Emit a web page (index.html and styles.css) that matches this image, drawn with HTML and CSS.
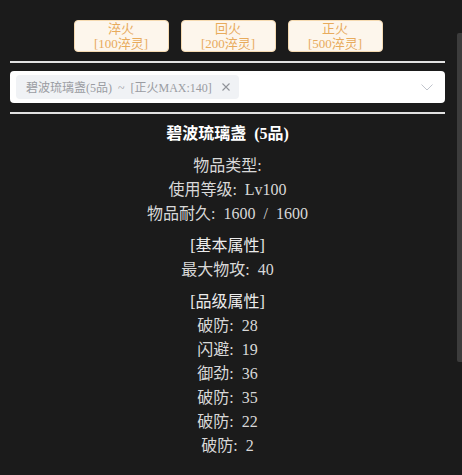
FILE: index.html
```html
<!DOCTYPE html>
<html lang="zh">
<head>
<meta charset="utf-8">
<link rel="stylesheet" href="styles.css">
</head>
<body>
<div class="page">
  <div class="actions">
    <button class="btn"><span>淬火</span><span>[100淬灵]</span></button>
    <button class="btn"><span>回火</span><span>[200淬灵]</span></button>
    <button class="btn"><span>正火</span><span>[500淬灵]</span></button>
  </div>
  <div class="rule"></div>
  <div class="select">
    <span class="tag">碧波琉璃盏(5品) ~ [正火MAX:140]
      <svg class="tag-close" width="8" height="8" viewBox="0 0 8 8"><path d="M0.5 0.5 L7.5 7.5 M7.5 0.5 L0.5 7.5" stroke="#909399" stroke-width="1.1" fill="none"/></svg>
    </span>
    <svg class="chevron" width="12" height="7" viewBox="0 0 12 7"><path d="M0.5 0.5 L6 6 L11.5 0.5" stroke="#c0c4cc" stroke-width="1" fill="none"/></svg>
  </div>
  <div class="rule"></div>
  <div class="info">
    <div class="line title">碧波琉璃盏 (5品)</div>
    <div class="group">
      <div class="line">物品类型:</div>
      <div class="line">使用等级: Lv100</div>
      <div class="line">物品耐久: 1600 / 1600</div>
    </div>
    <div class="group">
      <div class="line head">[基本属性]</div>
      <div class="line">最大物攻: 40</div>
    </div>
    <div class="group">
      <div class="line head">[品级属性]</div>
      <div class="line">破防: 28</div>
      <div class="line">闪避: 19</div>
      <div class="line">御劲: 36</div>
      <div class="line">破防: 35</div>
      <div class="line">破防: 22</div>
      <div class="line">破防: 2</div>
    </div>
  </div>
</div>
<div class="scrollbar"></div>
</body>
</html>
```

FILE: styles.css
```css
html, body {
  margin: 0;
  padding: 0;
  background: #1b1b1b;
  height: 100%;
  overflow: hidden;
}
body {
  font-family: "Liberation Serif", "Noto Sans CJK SC", serif;
  color: #d8d8d8;
  font-size: 16px;
}
.page {
  width: 435px;
  margin-left: 10px;
  padding-top: 20px;
}
.actions {
  display: flex;
  justify-content: center;
  gap: 12px;
  margin-left: 1px;
}
.btn {
  width: 95px;
  height: 32px;
  padding: 0;
  background: #fdf6ec;
  border: 1px solid #f5dab1;
  border-radius: 4px;
  color: #e8ab5c;
  font-family: "Liberation Serif", "Noto Sans CJK SC", serif;
  font-size: 13px;
  line-height: 15px;
  word-spacing: 1px;
  display: flex;
  flex-direction: column;
  align-items: center;
  justify-content: center;
}
.rule {
  height: 2px;
  background: #e2e2e2;
  margin: 9px 0 8px;
}
.select {
  height: 32px;
  box-sizing: border-box;
  background: #fff;
  border-radius: 4px;
  display: flex;
  align-items: center;
  padding: 0 12px 0 6px;
}
.tag {
  height: 24px;
  box-sizing: border-box;
  background: #f0f2f5;
  color: #9a9ca2;
  font-size: 12px;
  word-spacing: 3px;
  border-radius: 4px;
  padding: 0 9px 0 10px;
  display: flex;
  align-items: center;
  gap: 10px;
  white-space: nowrap;
}
.tag-close {
  display: block;
}
.chevron {
  margin-left: auto;
  display: block;
}
.info {
  text-align: center;
}
.line {
  line-height: 24px;
  word-spacing: 4px;
}
.title {
  color: #fff;
  font-weight: bold;
  margin-bottom: 8px;
}
.group {
  margin-bottom: 8px;
}
.head {
  color: #ececec;
}
.scrollbar {
  position: absolute;
  left: 457px;
  top: 33px;
  width: 5px;
  height: 329px;
  background: #3c3c3c;
  border-radius: 2px 0 0 2px;
}
```
